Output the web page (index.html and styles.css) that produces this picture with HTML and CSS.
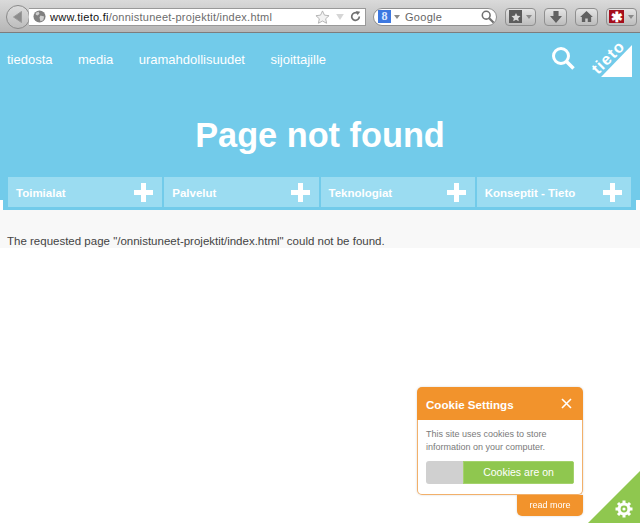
FILE: index.html
```html
<!DOCTYPE html>
<html lang="en">
<head>
<meta charset="utf-8">
<title>Page not found</title>
<link rel="stylesheet" href="styles.css">
</head>
<body>
<div class="chrome">
  <div class="back"><svg width="14" height="14" viewBox="0 0 14 14"><path d="M10.500 1.500v11L2.500 7z" fill="#8c8c8c" stroke="#9a9a9a"/></svg></div>
  <div class="urlbar">
    <svg class="globe" width="13" height="13" viewBox="0 0 14 14"><circle cx="7" cy="7" r="6.500" fill="#808080"/><path d="M3 3l3-1 1 2-2 2-2-1zM8 6l4 1-1 4-3 1-1-4z" fill="#cfcfcf"/></svg>
    <span class="url">www.<b>tieto.fi</b><i>/onnistuneet-projektit/index.html</i></span>
    <span class="urlicons">
      <svg width="15" height="14" viewBox="0 0 16 15"><path d="M8 1l2.100 4.500 4.900.6-3.600 3.300 1 4.800L8 11.800l-4.400 2.400 1-4.800L1 6.100l4.900-.6z" fill="#f2f2f2" stroke="#b0b0b0"/></svg>
      <svg width="8" height="6" viewBox="0 0 9 7"><path d="M0 0h9L4.500 7z" fill="#d6d6d6"/></svg>
      <svg width="11" height="11" viewBox="0 0 13 13"><path d="M11 6.500A4.500 4.500 0 1 1 8.500 2.500" fill="none" stroke="#707070" stroke-width="2"/><path d="M7 0l5 1-3 4z" fill="#707070"/></svg>
    </span>
  </div>
  <div class="search">
    <span class="gicon">8</span><span class="caret small"></span>
    <span class="stext">Google</span>
    <svg width="13" height="13" viewBox="0 0 15 15"><circle cx="6" cy="6" r="4.500" fill="none" stroke="#707070" stroke-width="1.800"/><path d="M9.500 9.500l5 5" stroke="#707070" stroke-width="2.500"/></svg>
  </div>
  <div class="tbtn wide"><span class="sq"><svg width="12" height="12" viewBox="0 0 16 15"><path d="M8 2l1.800 3.800 4.200.5-3.100 2.900.8 4.100L8 11.300l-3.700 2 .8-4.100L2 6.300l4.200-.5z" fill="#ddd"/></svg></span><span class="caret"></span></div>
  <div class="tbtn"><svg width="12" height="13" viewBox="0 0 14 15"><path d="M4 1h6v6h4l-7 8-7-8h4z" fill="#606060"/></svg></div>
  <div class="tbtn"><svg width="13" height="11" viewBox="0 0 15 13"><path d="M7.500 0L15 7h-2v6H9V9H6v4H2V7H0z" fill="#606060"/></svg></div>
  <div class="tbtn wide"><span class="lp">✱</span><span class="caret"></span></div>
</div>

<header class="hero">
  <div class="topnav">
    <nav class="links">
      <a>tiedosta</a><a>media</a><a>uramahdollisuudet</a><a>sijoittajille</a>
    </nav>
    <svg class="mag" width="24" height="24" viewBox="0 0 24 24"><circle cx="10" cy="10" r="7.500" fill="none" stroke="#fff" stroke-width="3"/><path d="M15.500 15.500l7 7" stroke="#fff" stroke-width="3.500"/></svg>
    <svg class="logo" width="42" height="37" viewBox="0 0 42 37"><path d="M42 5v32H11z" fill="#fff"/><text transform="translate(8 35) rotate(-45)" class="logotext">tieto</text></svg>
  </div>
  <h1>Page not found</h1>
  <div class="band">
    <div class="tabs">
      <div class="tab"><span class="tablabel">Toimialat</span><span class="plus"></span></div>
      <div class="tab"><span class="tablabel">Palvelut</span><span class="plus"></span></div>
      <div class="tab"><span class="tablabel">Teknologiat</span><span class="plus"></span></div>
      <div class="tab"><span class="tablabel">Konseptit - Tieto</span><span class="plus"></span></div>
    </div>
  </div>
</header>

<main class="content">
  <p>The requested page "/onnistuneet-projektit/index.html" could not be found.</p>
</main>

<aside class="cookie">
  <div class="chead"><span>Cookie Settings</span><svg width="11" height="11" viewBox="0 0 11 11"><path d="M1 1l9 9M10 1l-9 9" stroke="#fff" stroke-width="1.600"/></svg></div>
  <div class="cbody">
    <p>This site uses cookies to store information on your computer.</p>
    <div class="toggle"><span class="off"></span><span class="on">Cookies are on</span></div>
  </div>
  <div class="more">read more</div>
</aside>
<div class="corner">
  <svg width="52" height="52" viewBox="0 0 52 52"><path d="M52 0v52H0z" fill="#8fc74f"/><g transform="translate(36 38)"><circle r="6.500" fill="#fff"/><path d="M-1.500-8.500h3v17h-3zM-8.500-1.500h17v3h-17z" fill="#fff"/><path d="M-1.500-8.500h3v17h-3zM-8.500-1.500h17v3h-17z" fill="#fff" transform="rotate(45)"/><circle r="2.500" fill="none" stroke="#8fc74f" stroke-width="1.800"/></g></svg>
</div>
</body>
</html>
```
FILE: styles.css
```css
html, body {
  margin: 0;
  padding: 0;
  height: 100%;
  background: #fff;
  overflow: hidden;
  font-family: "Liberation Sans", Arial, sans-serif;
}
.chrome {
  height: 33px;
  box-sizing: border-box;
  display: flex;
  align-items: center;
  padding: 2px 0 1px 6px;
  background: linear-gradient(#dadada, #b6b6b6);
  border-bottom: 1px solid #7d7d7d;
}
.back {
  width: 24px;
  height: 24px;
  box-sizing: border-box;
  border: 1px solid #8a8a8a;
  border-radius: 50%;
  background: linear-gradient(#dcdcdc, #bdbdbd);
  display: flex;
  align-items: center;
  justify-content: center;
  margin-right: -1px;
}
.urlbar {
  width: 337px;
  height: 18px;
  box-sizing: border-box;
  background: #fff;
  border: 1px solid #999;
  border-left: 0;
  display: flex;
  align-items: center;
  padding-left: 4px;
}
.globe { margin-right: 4px; flex: none; }
.url { font-size: 11px; letter-spacing: 0.25px; color: #111; flex: 1; white-space: nowrap; }
.url b { font-weight: 400; }
.url i { font-style: normal; color: #6c6c6c; }
.urlicons { display: flex; align-items: center; gap: 6px; padding-right: 4px; }
.search {
  margin-left: 7px;
  width: 124px;
  height: 18px;
  box-sizing: border-box;
  border: 1px solid #8f8f8f;
  border-radius: 9px;
  background: #fff;
  display: flex;
  align-items: center;
  padding: 0 2px 0 4px;
}
.gicon {
  width: 13px;
  height: 13px;
  background: #3d78e0;
  color: #dde8ff;
  font: bold 12px/13px "Liberation Serif", serif;
  text-align: center;
  flex: none;
}
.stext { font-size: 11px; letter-spacing: 0.3px; color: #666; flex: 1; margin-left: 5px; }
.caret {
  width: 0;
  height: 0;
  border-style: solid;
  border-color: #8a8a8a transparent transparent;
  border-width: 4px 3.500px 0;
  margin-left: 4px;
}
.caret.small { margin-left: 3px; border-width: 4px 3px 0; }
.tbtn {
  margin-left: 8px;
  width: 23px;
  height: 18px;
  box-sizing: border-box;
  border: 1px solid #8f8f8f;
  border-radius: 4px;
  background: linear-gradient(#e4e4e4, #bcbcbc);
  display: flex;
  align-items: center;
  justify-content: center;
}
.tbtn.wide { width: 31px; }
.sq { width: 13px; height: 13px; background: #5c5c5c; display: flex; align-items: center; justify-content: center; }
.lp { width: 15px; height: 13px; background: #a50e1c; color: #fff; font: bold 14px/15px "Liberation Sans", sans-serif; text-align: center; }
.hero {
  background: linear-gradient(#72cbea, #72cbea) top / 100% 167px no-repeat;
}
.topnav {
  display: flex;
  align-items: center;
  height: 45px;
  padding: 3px 8px 0 7px;
  box-sizing: border-box;
}
.links { flex: 1; display: flex; gap: 25.400px; margin-top: 4px; }
.links a { color: #fff; font-size: 13px; }
.mag { margin-right: 15px; margin-top: 1px; }
.logo { margin-top: 3px; overflow: visible; }
.logotext { fill: #fff; font: bold 16px "Liberation Sans", sans-serif; letter-spacing: 1.200px; }
h1 {
  margin: 0;
  box-sizing: border-box;
  height: 99px;
  padding-top: 37px;
  font-size: 34.300px;
  line-height: 40px;
  font-weight: 700;
  color: #fff;
  text-align: center;
}
.band {
  margin: 0 4px 0 3px;
  padding: 0 5px 3px;
  background: #72cbea;
}
.tabs {
  display: flex;
  gap: 2px;
}
.tab {
  flex: 1;
  height: 30px;
  background: #9bdcf1;
  color: #fff;
  font-size: 11.500px;
  font-weight: 700;
  display: flex;
  align-items: center;
  justify-content: space-between;
  padding: 0 9px 0 8px;
  box-sizing: border-box;
}
.tablabel { margin-top: 2px; }
.plus {
  width: 19px;
  height: 19px;
  background:
    linear-gradient(#fff, #fff) center / 19px 5px no-repeat,
    linear-gradient(#fff, #fff) center / 5px 19px no-repeat;
}
.content {
  height: 38px;
  box-sizing: border-box;
  background: #f8f8f8;
}
.content p {
  margin: 0;
  padding: 24px 0 0 7px;
  font-size: 11.500px;
  line-height: 14px;
  color: #444;
}
.cookie {
  position: absolute;
  left: 417px;
  top: 387px;
  width: 166px;
  filter: drop-shadow(0 0 1px rgba(0, 0, 0, 0.15));
}
.chead {
  height: 33px;
  box-sizing: border-box;
  background: #f2932c;
  border-radius: 5px 5px 0 0;
  color: #fff;
  font-size: 11.600px;
  font-weight: 700;
  display: flex;
  align-items: center;
  justify-content: space-between;
  padding: 2px 11px 0 9px;
}
.chead svg { margin-top: -3px; }
.cbody {
  box-sizing: border-box;
  height: 75px;
  background: #fff;
  border: 1px solid #f2b06a;
  border-top: 0;
  border-radius: 0 0 5px 5px;
  padding: 8px 8px 0;
}
.cbody p {
  margin: 0 0 7px;
  font-size: 9px;
  line-height: 13px;
  color: #7a7a7a;
}
.toggle {
  display: flex;
  height: 23px;
  width: 148px;
  border-radius: 3px;
  overflow: hidden;
}
.off { width: 37px; background: #d0d0d0; }
.on {
  flex: 1;
  box-sizing: border-box;
  background: #8fc74f;
  border: 1px solid #a4d26c;
  color: #fff;
  font-size: 10.500px;
  line-height: 21px;
  text-align: center;
}
.more {
  width: 66px;
  height: 21px;
  margin-left: 100px;
  background: #f2932c;
  border-radius: 0 0 5px 5px;
  color: #fff;
  font-size: 9px;
  line-height: 21px;
  text-align: center;
}
.corner {
  position: absolute;
  right: 0;
  bottom: 0;
  width: 52px;
  height: 52px;
}
.corner svg { display: block; }
```
